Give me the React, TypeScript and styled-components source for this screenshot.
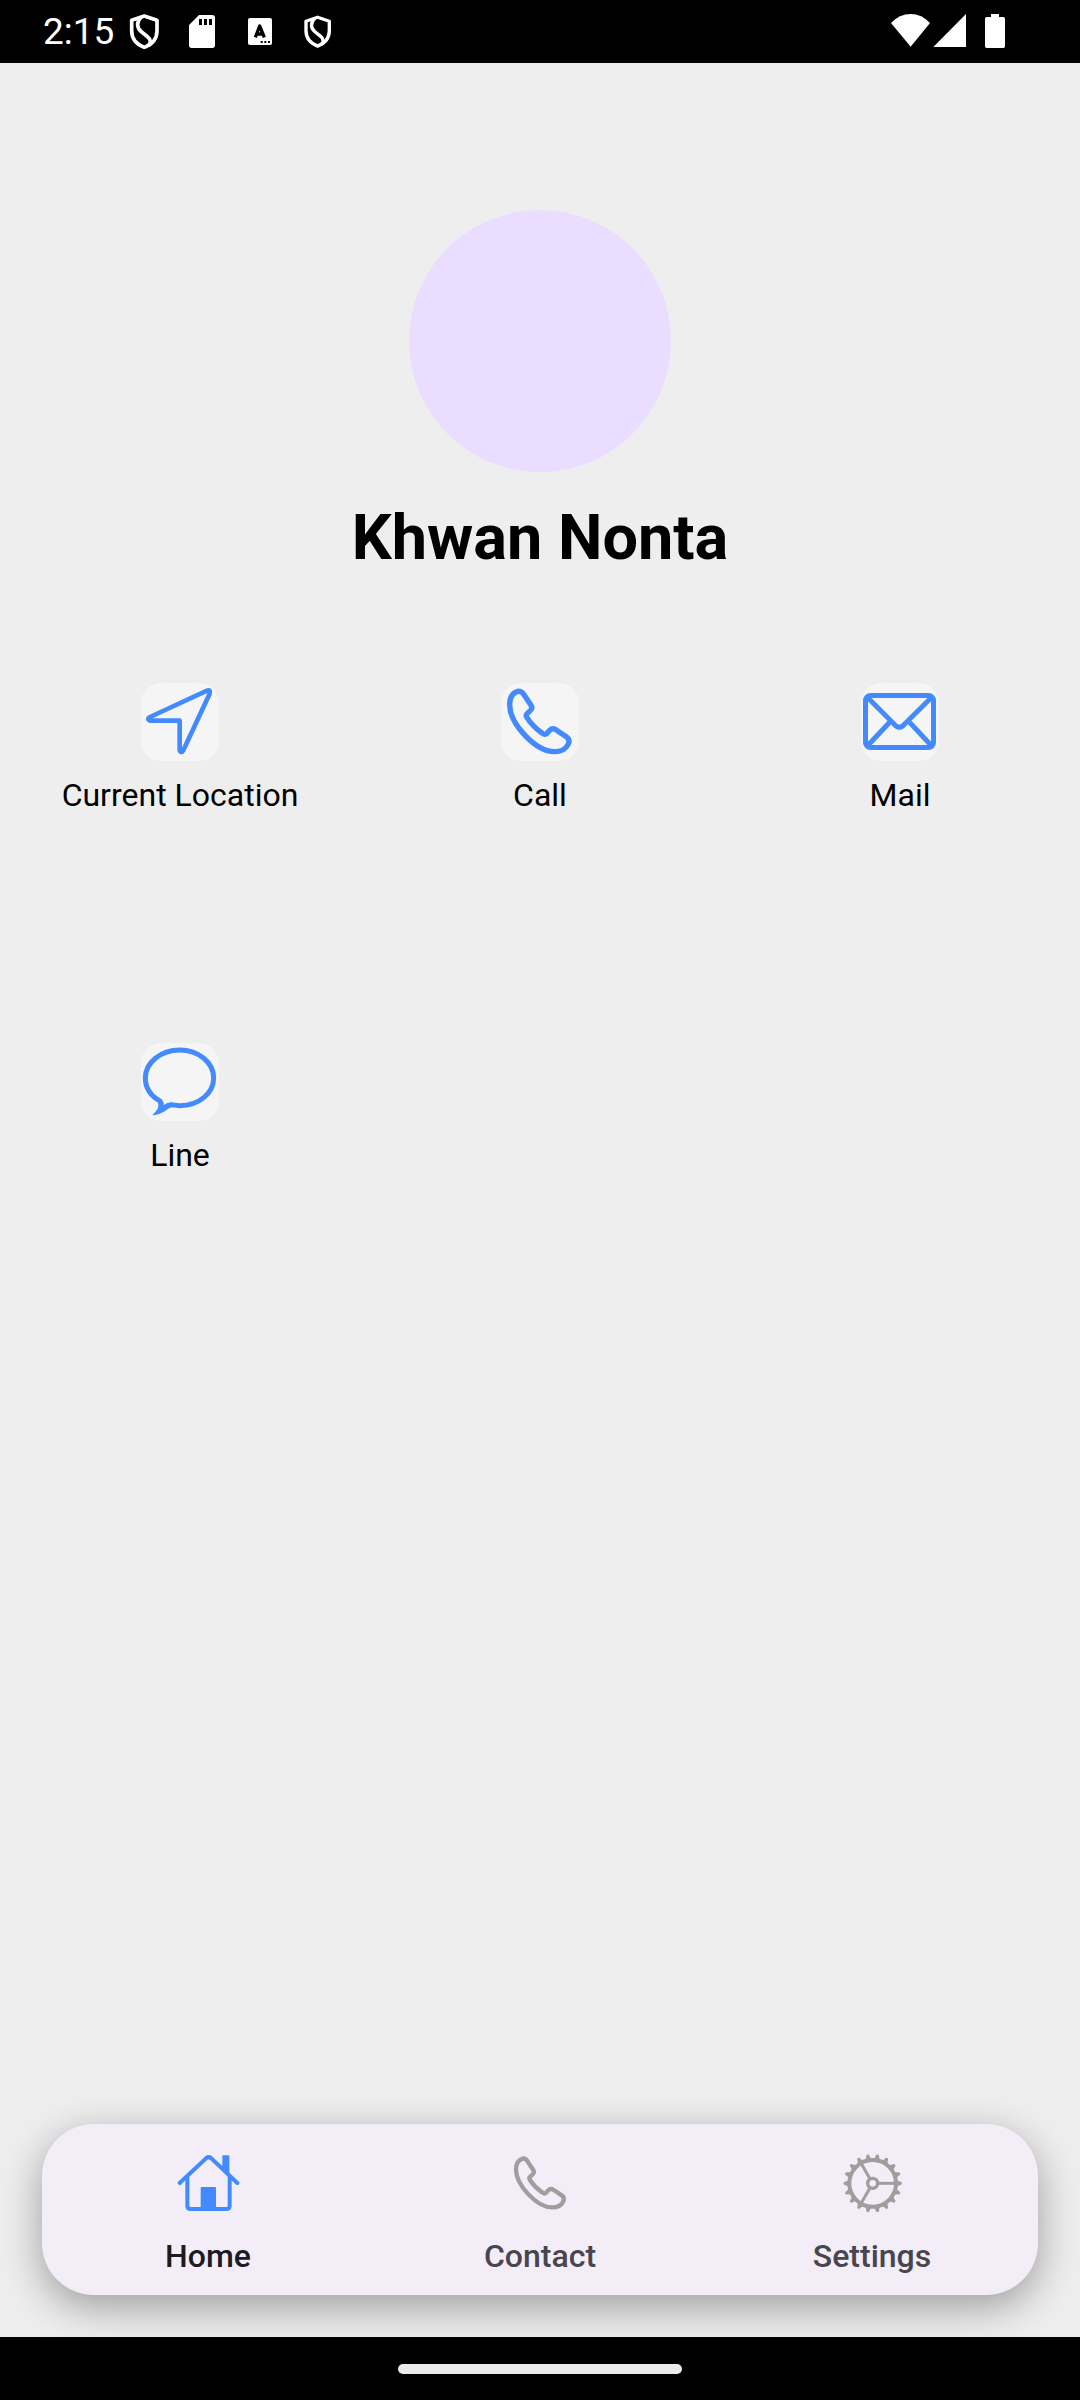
import React from "react";
import styled, { createGlobalStyle } from "styled-components";

const BLUE = "#448aff";
const GREY = "#9e9e9e";

const GlobalStyle = createGlobalStyle`
  * { box-sizing: border-box; }
  body {
    margin: 0;
    background: #eeeeee;
    font-family: Roboto, "Liberation Sans", sans-serif;
  }
  button {
    border: 0;
    padding: 0;
    background: none;
    font: inherit;
    color: inherit;
    cursor: pointer;
  }
`;

const Screen = styled.div`
  display: flex;
  flex-direction: column;
  min-height: 100vh;
`;

const StatusBar = styled.header`
  display: flex;
  align-items: center;
  justify-content: space-between;
  height: 63px;
  padding: 0 72px 0 43px;
  background: #000;
  color: #fff;
`;

const StatusGroup = styled.div<{ $gap: number }>`
  display: flex;
  align-items: center;
  gap: ${(p) => p.$gap}px;
`;

const Clock = styled.time`
  width: 60px;
  font-size: 37px;
  line-height: 42px;
  white-space: nowrap;
`;

const StatusIcon = styled.svg<{ $width: number }>`
  display: block;
  width: ${(p) => p.$width}px;
  height: 35px;
`;

const Content = styled.main`
  flex: 1;
  padding-top: 147px;
`;

const Profile = styled.section`
  display: flex;
  flex-direction: column;
  align-items: center;
  gap: 28px;
`;

const Avatar = styled.div`
  width: 262px;
  height: 262px;
  border-radius: 50%;
  background: #eaddff;
`;

const Name = styled.h1`
  margin: 0;
  font-size: 63px;
  line-height: 76px;
  font-weight: 700;
  color: #000;
`;

const ActionGrid = styled.section`
  display: grid;
  grid-template-columns: repeat(3, 1fr);
  margin-top: 107px;
`;

const Cell = styled.div`
  display: flex;
  align-items: flex-start;
  justify-content: center;
  aspect-ratio: 1;
`;

const ActionButton = styled.button`
  display: flex;
  flex-direction: column;
  align-items: center;
  gap: 13px;
  font-size: 32px;
  line-height: 42px;
  color: #000;
`;

const Tile = styled.span`
  display: block;
  width: 78px;
  height: 78px;
  border-radius: 20px;
  background: #f5f5f5;
  color: ${BLUE};
`;

const Glyph = styled.svg`
  display: block;
  width: 100%;
  height: 100%;
`;

const NavBar = styled.nav`
  display: grid;
  grid-template-columns: repeat(3, 1fr);
  margin: 0 42px 42px;
  padding: 28px 0 18px;
  border-radius: 52px;
  background: #f3edf7;
  box-shadow: 0 12px 40px rgba(0, 0, 0, 0.34);
`;

const NavButton = styled.button<{ $active?: boolean }>`
  display: flex;
  flex-direction: column;
  align-items: center;
  gap: 20px;
  font-size: 32px;
  line-height: 42px;
  font-weight: 500;
  color: ${(p) => (p.$active ? "#1d1b20" : "#49454f")};
`;

const NavIcon = styled.span<{ $active?: boolean }>`
  width: 63px;
  height: 63px;
  color: ${(p) => (p.$active ? BLUE : GREY)};
`;

const GestureBar = styled.footer`
  position: relative;
  display: flex;
  align-items: center;
  justify-content: center;
  height: 63px;
  background: #000;
`;

const GestureHandle = styled.div`
  width: 284px;
  height: 10px;
  border-radius: 5px;
  background: #ebebeb;
`;

const ShieldPaths = () => (
  <g fill="none" stroke="currentColor" strokeWidth="11" strokeLinejoin="round">
    <path d="M433 48L471 61V92C471 116 456 133 433 142C410 133 395 116 395 92V61Z" />
    <path d="M424 51C408 66 410 84 425 96L440 108C454 119 453 128 445 137" />
  </g>
);

const LocationIcon = () => (
  <Glyph viewBox="303 39 234 234" aria-hidden="true">
    <path
      d="M330 141L501 62Q513 58 509 71L430 241Q424 251 419 241V152H330Q319 147 330 141Z"
      fill="none" stroke="currentColor" strokeWidth="14" strokeLinejoin="round"
    />
  </Glyph>
);

const PhoneIcon = () => (
  <Glyph viewBox="63 39 234 234" aria-hidden="true">
    <path
      d="M108 66C98 71 89 82 89 104C89 160 165 245 224 245C245 245 258 236 264 224C269 214 268 206 259 200L232 182C224 176 216 174 209 181L201 190C197 194 191 193 186 189C170 178 150 157 141 143C137 137 138 133 143 129L150 123C157 117 157 112 153 106L132 74C126 64 117 61 108 66Z"
      fill="none" stroke="currentColor" strokeWidth="16" strokeLinejoin="round"
    />
  </Glyph>
);

const MailIcon = () => (
  <Glyph viewBox="63 39 234 234" aria-hidden="true">
    <g fill="none" stroke="currentColor" strokeWidth="15">
      <rect x="76.5" y="76.5" width="204" height="156" rx="15" />
      <path d="M82 82L160 160Q178 184 196 160L275 82" />
      <path d="M82 228L149 157M275 228L209 157" />
    </g>
  </Glyph>
);

const ChatIcon = () => (
  <Glyph viewBox="63 39 234 234" aria-hidden="true">
    <path
      d="M123 215C95 200 76 176 76 144C76 98 122 60 179 60C236 60 281 98 281 144C281 190 236 227 179 227C168 227 162 224 152 224"
      fill="none" stroke="currentColor" strokeWidth="15"
    />
    <path
      d="M98 254C110 243 118 232 114 218L124 208C131 214 132 219 131 226C138 220 146 217 156 217L158 231C142 233 130 254 98 256Z"
      fill="currentColor"
    />
  </Glyph>
);

const HomeIcon = () => (
  <Glyph viewBox="470 186 189 189" aria-hidden="true">
    <g fill="none" stroke="currentColor" strokeWidth="12" strokeLinecap="round">
      <path d="M478 279L558 204Q565 199 572 204L651 279" />
      <path d="M501 260V347Q501 357 511 357H618Q628 357 628 347V260" />
    </g>
    <path d="M606 199Q606 196 609 196H624Q627 196 627 199V260L606 240Z" fill="currentColor" />
    <rect x="541" y="291" width="46" height="68" rx="3" fill="currentColor" />
  </Glyph>
);

const TEETH = Array.from({ length: 18 }, (_, i) => i * 20);

const GearIcon = () => (
  <Glyph viewBox="182 186 189 189" aria-hidden="true">
    <g transform="translate(277 280)">
      <g fill="none" stroke="currentColor">
        <circle r="70" strokeWidth="12" />
        <circle r="15" strokeWidth="10" />
        {[0, 120, 240].map((a) => (
          <path key={a} d="M18 0H68" strokeWidth="9" transform={`rotate(${a})`} />
        ))}
      </g>
      {TEETH.map((a) => (
        <path
          key={a}
          d="M72 -11L77 -7L86 -4Q90 0 86 4L77 7L72 11Z"
          fill="currentColor"
          transform={`rotate(${a})`}
        />
      ))}
    </g>
  </Glyph>
);

const actions = [
  { label: "Current Location", Icon: LocationIcon },
  { label: "Call", Icon: PhoneIcon },
  { label: "Mail", Icon: MailIcon },
  { label: "Line", Icon: ChatIcon },
];

const tabs = [
  { label: "Home", Icon: HomeIcon, active: true },
  { label: "Contact", Icon: PhoneIcon, active: false },
  { label: "Settings", Icon: GearIcon, active: false },
];

export default function App() {
  return (
    <Screen>
      <GlobalStyle />
      <StatusBar>
        <StatusGroup $gap={24}>
          <Clock>2:15</Clock>
          <StatusIcon $width={34} viewBox="381 42 102 105" aria-hidden="true">
            <ShieldPaths />
          </StatusIcon>
          <StatusIcon $width={34} viewBox="555 42 102 105" aria-hidden="true">
            <path
              fillRule="evenodd"
              fill="currentColor"
              d="M597 45H637Q645 45 645 53V136Q645 144 637 144H575Q567 144 567 136V75ZM597 57V75H606V57ZM612 57V75H621V57ZM627 57V75H636V57Z"
            />
          </StatusIcon>
          <StatusIcon $width={34} viewBox="729 42 102 105" aria-hidden="true">
            <rect x="744" y="54" width="72" height="81" rx="6" fill="currentColor" />
            <path d="M766 112L779 78L793 112M770 102H789" fill="none" stroke="#000" strokeWidth="10" strokeLinejoin="round" />
            <path d="M782 126H812" fill="none" stroke="#000" strokeWidth="6" strokeDasharray="6 5" />
          </StatusIcon>
          <StatusIcon $width={34} viewBox="903 42 102 105" aria-hidden="true">
            <g transform="translate(953 95) scale(0.92) translate(-433 -95)">
              <ShieldPaths />
            </g>
          </StatusIcon>
        </StatusGroup>
        <StatusGroup $gap={0}>
          <StatusIcon $width={39} viewBox="93 42 117 105" aria-hidden="true">
            <path d="M93 69Q118 42 152 42Q185 42 210 69L152 140Z" fill="currentColor" />
          </StatusIcon>
          <StatusIcon $width={39} viewBox="210 42 117 105" aria-hidden="true">
            <path d="M318 42V141H220Z" fill="currentColor" />
          </StatusIcon>
          <StatusIcon $width={39} viewBox="327 42 117 105" aria-hidden="true">
            <path d="M393 42H417V51H430Q435 51 435 56V139Q435 144 430 144H380Q375 144 375 139V56Q375 51 380 51H393Z" fill="currentColor" />
          </StatusIcon>
        </StatusGroup>
      </StatusBar>

      <Content>
        <Profile>
          <Avatar />
          <Name>Khwan Nonta</Name>
        </Profile>
        <ActionGrid>
          {actions.map(({ label, Icon }) => (
            <Cell key={label}>
              <ActionButton type="button">
                <Tile><Icon /></Tile>
                {label}
              </ActionButton>
            </Cell>
          ))}
        </ActionGrid>
      </Content>

      <NavBar>
        {tabs.map(({ label, Icon, active }) => (
          <NavButton key={label} type="button" $active={active} aria-current={active ? "page" : undefined}>
            <NavIcon $active={active}><Icon /></NavIcon>
            {label}
          </NavButton>
        ))}
      </NavBar>

      <GestureBar>
        <GestureHandle />
      </GestureBar>
    </Screen>
  );
}
